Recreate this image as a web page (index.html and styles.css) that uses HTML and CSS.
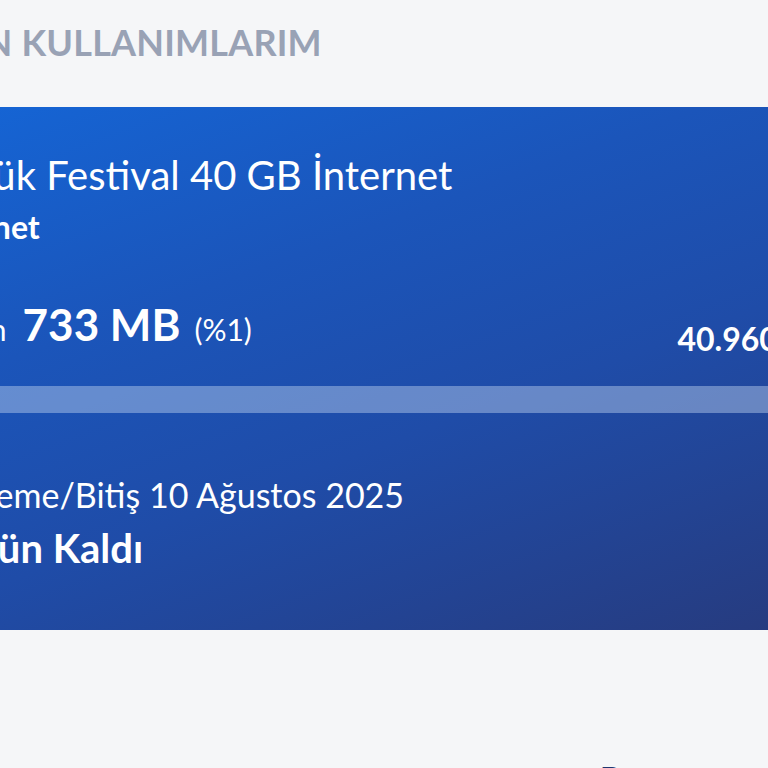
FILE: index.html
```html
<!DOCTYPE html>
<html lang="tr">
<head>
<meta charset="utf-8">
<title>Kullanımlarım</title>
<link rel="stylesheet" href="styles.css">
</head>
<body>
<div class="page">
  <h2 class="section-title">PAKETLERİMİN KULLANIMLARIM</h2>
  <section class="card">
    <div class="card-body">
      <h3 class="pkg-name">Büyük Festival 40 GB İnternet</h3>
      <div class="pkg-type">İnternet</div>
      <div class="usage-row">
        <div class="used"><span class="used-label">Kullanılan</span><span class="used-value">733 MB</span><span class="used-pct">(%1)</span></div>
        <div class="total">40.960 MB</div>
      </div>
    </div>
    <div class="progress"><div class="progress-fill" style="width:1%"></div></div>
    <div class="card-body dates">
      <div class="renew">Yenileme/Bitiş 10 Ağustos 2025</div>
      <div class="remaining">30 Gün Kaldı</div>
    </div>
  </section>
  <div class="more-row">
    <span class="more-link">Detay</span>
  </div>
</div>
</body>
</html>
```
FILE: styles.css
```css
* { box-sizing: border-box; margin: 0; padding: 0; }
html, body { background: #f5f6f8; }
body {
  font-family: Lato, "Noto Sans", sans-serif;
  overflow: hidden;
  width: 768px;
  height: 768px;
}
.page {
  margin-left: -150px;
  width: 1100px;
  padding-top: 20px;
}
.section-title {
  font-size: 36px;
  font-weight: 700;
  color: #99a2b5;
  letter-spacing: 0.2px;
  line-height: 44px;
  margin-left: -98px;
}
.card {
  margin-top: 43px;
  width: 1000px;
  height: 523px;
  background: linear-gradient(160deg, #1467d9 0%, #1b55ba 35%, #1f4ca8 60%, #273a7c 100%);
}
.card-body { padding: 0 13px 0 75px; }
.pkg-name {
  padding-top: 44px;
  font-size: 40px;
  font-weight: 400;
  color: #fff;
  line-height: 48px;
}
.pkg-type {
  font-size: 32px;
  font-weight: 700;
  color: #fff;
  line-height: 40px;
  margin-top: 8px;
}
.usage-row {
  display: flex;
  justify-content: space-between;
  align-items: flex-end;
  margin-top: 51px;
  color: #fff;
}
.used { margin-left: -46px; }
.used-label { font-size: 30px; margin-right: 16px; }
.used-value { font-size: 44px; font-weight: 700; }
.used-pct { font-size: 30px; margin-left: 14px; }
.total { font-size: 32px; font-weight: 700; margin-bottom: -8px; }
.progress {
  margin-top: 36px;
  height: 27px;
  background: rgba(190, 210, 240, 0.45);
}
.progress-fill { height: 100%; background: #fff; }
.dates { padding-top: 61px; color: #fff; }
.renew { font-size: 34px; line-height: 42px; }
.remaining { font-size: 40px; font-weight: 700; line-height: 50px; margin-top: 7px; margin-left: -12px; }
.more-row {
  display: flex;
  justify-content: flex-start;
  padding-left: 750px;
  margin-top: 129px;
}
.more-link { font-size: 32px; font-weight: 700; color: #1e3670; }
```
